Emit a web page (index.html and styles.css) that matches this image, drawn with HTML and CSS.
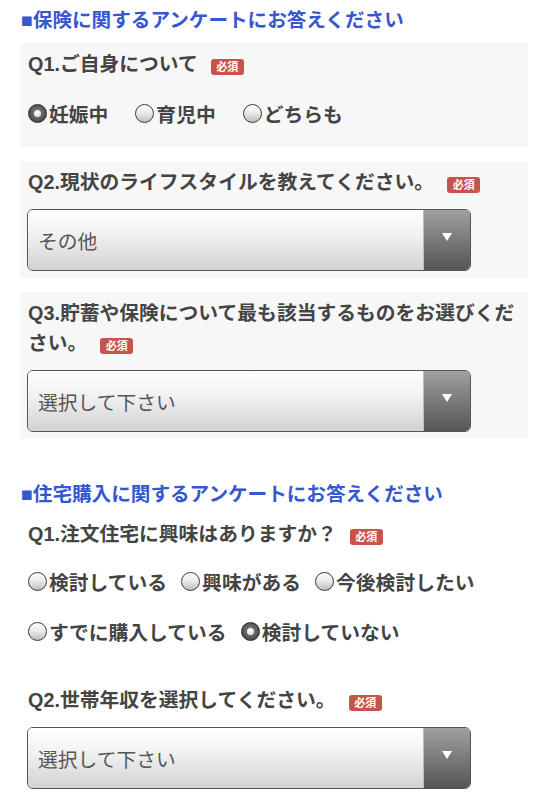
FILE: index.html
```html
<!DOCTYPE html>
<html lang="ja">
<head>
<meta charset="utf-8">
<title>アンケート</title>
<link rel="stylesheet" href="styles.css">
</head>
<body>
<h2 class="section-title first">■保険に関するアンケートにお答えください</h2>

<div class="box">
  <p class="q">Q1.ご自身について<span class="badge">必須</span></p>
  <div class="opts wide">
    <label class="opt"><span class="radio checked"></span>妊娠中</label>
    <label class="opt"><span class="radio"></span>育児中</label>
    <label class="opt"><span class="radio"></span>どちらも</label>
  </div>
</div>

<div class="box">
  <p class="q">Q2.現状のライフスタイルを教えてください。<span class="badge">必須</span></p>
  <div class="select"><span class="select-text">その他</span><span class="select-arrow"></span></div>
</div>

<div class="box">
  <p class="q">Q3.貯蓄や保険について最も該当するものをお選びください。<span class="badge">必須</span></p>
  <div class="select"><span class="select-text">選択して下さい</span><span class="select-arrow"></span></div>
</div>

<h2 class="section-title second">■住宅購入に関するアンケートにお答えください</h2>

<div class="box plain">
  <p class="q">Q1.注文住宅に興味はありますか？<span class="badge">必須</span></p>
  <div class="opts tight">
    <label class="opt"><span class="radio"></span>検討している</label>
    <label class="opt"><span class="radio"></span>興味がある</label>
    <label class="opt"><span class="radio"></span>今後検討したい</label>
  </div>
  <div class="opts row2">
    <label class="opt"><span class="radio"></span>すでに購入している</label>
    <label class="opt"><span class="radio checked"></span>検討していない</label>
  </div>
</div>

<div class="box plain">
  <p class="q">Q2.世帯年収を選択してください。<span class="badge">必須</span></p>
  <div class="select"><span class="select-text">選択して下さい</span><span class="select-arrow"></span></div>
</div>
</body>
</html>
```

FILE: styles.css
```css
html, body {
  margin: 0;
  padding: 0;
  background: #ffffff;
}
body {
  padding: 0 20px;
  font-family: "Liberation Sans", "Noto Sans CJK JP", sans-serif;
  color: #444444;
}
.section-title {
  margin: 0;
  font-size: 19.6px;
  line-height: 24px;
  font-weight: bold;
  color: #3558d0;
  padding-left: 1px;
}
.section-title.first {
  padding-top: 8px;
  margin-bottom: 11px;
}
.section-title.second {
  margin-top: 43px;
  margin-bottom: 7px;
}
.box {
  background: #f7f7f7;
  padding: 6px 4px 7px 8px;
  margin-bottom: 14px;
}
.box.plain {
  background: #ffffff;
}
.q {
  margin: 0;
  font-size: 19.8px;
  line-height: 30px;
  font-weight: bold;
  color: #444444;
}
.badge {
  display: inline-block;
  width: 33px;
  height: 16px;
  margin-left: 13px;
  border-radius: 3px;
  background: #c8524c;
  color: #ffffff;
  font-size: 11px;
  line-height: 16px;
  font-weight: bold;
  text-align: center;
  vertical-align: 0px;
}
.opts {
  display: flex;
  flex-wrap: wrap;
  column-gap: 14px;
  margin-top: 19px;
  margin-bottom: 12px;
}
.opts.wide {
  column-gap: 27px;
}
.opts.tight {
  margin-top: 17px;
}
.opts.row2 {
  margin-top: 20px;
}
.opt {
  display: flex;
  align-items: center;
  height: 30px;
  font-size: 19.8px;
  font-weight: bold;
  color: #444444;
}
.radio {
  box-sizing: border-box;
  width: 19px;
  height: 19px;
  margin-right: 2px;
  border: 1px solid #3a3a3a;
  border-radius: 50%;
  background: linear-gradient(#ffffff 0%, #e8e8e8 50%, #bdbdbd 100%);
  position: relative;
}
.radio.checked {
  background: radial-gradient(circle at 50% 45%, #8a8a8a 0%, #555555 60%, #2c2c2c 100%);
  border-color: #2a2a2a;
}
.radio.checked::after {
  content: "";
  position: absolute;
  left: 5px;
  top: 5px;
  width: 7px;
  height: 7px;
  border-radius: 50%;
  background: radial-gradient(circle at 40% 35%, #ffffff 0%, #e0e0e0 70%, #bbbbbb 100%);
}
.select {
  box-sizing: border-box;
  display: flex;
  width: 444px;
  height: 62px;
  margin-top: 12px;
  margin-left: -1px;
  border: 1px solid #555555;
  border-radius: 6px;
  overflow: hidden;
}
.select-text {
  flex: 1;
  display: flex;
  align-items: center;
  padding-left: 10px;
  font-size: 19.8px;
  color: #555555;
  background: linear-gradient(#ffffff 0%, #f2f2f2 40%, #d2d2d2 100%);
  border-right: 1px solid #bdbdbd;
}
.select-arrow {
  width: 46px;
  position: relative;
  background: linear-gradient(#a0a0a0 0%, #7a7a7a 50%, #555555 100%);
}
.select-arrow::after {
  content: "";
  position: absolute;
  left: 18px;
  top: 23px;
  border-left: 5px solid transparent;
  border-right: 5px solid transparent;
  border-top: 8px solid #ffffff;
}
```
